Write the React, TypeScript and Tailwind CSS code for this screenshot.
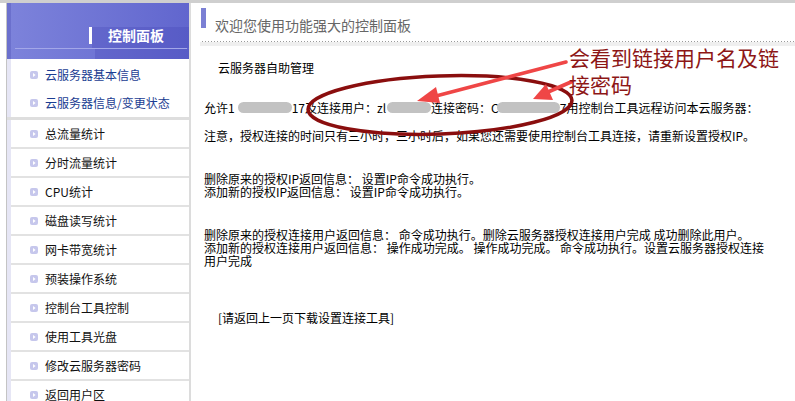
import React from "react";

const groupOne = ["云服务器基本信息", "云服务器信息/变更状态"];
const groupTwo = [
  "总流量统计",
  "分时流量统计",
  "CPU统计",
  "磁盘读写统计",
  "网卡带宽统计",
  "预装操作系统",
  "控制台工具控制",
  "使用工具光盘",
  "修改云服务器密码",
  "返回用户区",
];

function Bullet() {
  return (
    <svg width="8" height="8" viewBox="0 0 8 8" className="shrink-0">
      <rect x="0" y="0" width="8" height="8" rx="2" fill="#c6c7ec" />
      <polygon points="3,2 5.6,4 3,6" fill="#ffffff" />
    </svg>
  );
}

function Blob({ w, ml }: { w: string; ml: string }) {
  return <span className={`inline-block h-[11px] rounded-full bg-[#c2c2c2] blur-[0.6px] ${w} ${ml}`} />;
}

export default function App() {
  return (
    <div className="relative w-[795px] h-[401px] overflow-hidden bg-white font-['Noto_Sans_CJK_SC','Noto_Sans',sans-serif] text-[12px] text-black">
      <div className="h-[3px] bg-[#cfcfcf]" />
      <div className="flex">
        {/* Sidebar */}
        <div className="ml-[6px] w-[185px] border-l border-l-[#c4c4c4] border-r-2 border-r-[#dcdcdc] flex flex-col">
          {/* header */}
          <div className="h-[56px] flex bg-[linear-gradient(to_right,#7d83db,#6166ce)]">
            <div className="w-[4px] bg-[#6b70cd]" />
            <div className="flex-1 flex flex-col">
              <div className="h-[24px]" />
              <div className="flex h-[21px]">
                <div className="w-[81px] flex justify-end">
                  <div className="w-[3px] h-[17px] bg-white" />
                </div>
                <div className="flex-1 bg-[#3a3cb0]/25 pl-[16px] flex items-center pb-[6px]">
                  <span className="text-white font-bold text-[14px] leading-[16px]">控制面板</span>
                </div>
              </div>
              <div className="h-[1px] ml-[4px] mr-[2px] bg-[#a3a7e8]" />
              <div className="flex flex-1">
                <div className="w-[84px]" />
                <div className="flex-1 bg-[#3a3cb0]/25" />
              </div>
            </div>
          </div>
          {/* group one */}
          <div className="border-l-4 border-l-[#e6e6f5] pt-[2px]">
            {groupOne.map((t) => (
              <div key={t} className="h-[28px] flex items-center pl-[19px] gap-[7px]">
                <Bullet />
                <span className="text-[#1b3d92] leading-[14px]">{t}</span>
              </div>
            ))}
          </div>
          <div className="h-[3px] bg-[#dedede]" />
          <div className="border-l-4 border-l-[#e6e6f5]">
            {groupTwo.map((t) => (
              <div key={t} className="h-[29px] border-b-2 border-b-[#e2e2e2] flex items-center pl-[19px] gap-[7px]">
                <Bullet />
                <span className="text-[#111] leading-[14px]">{t}</span>
              </div>
            ))}
          </div>
        </div>

        {/* Main */}
        <div className="ml-[9px] flex-1 flex flex-col">
          <div className="flex items-start">
            <div className="ml-[1px] mt-[5px] w-[5px] h-[20px] bg-[#7b80d4]" />
            <div className="ml-[9px] pt-[14px] text-[14px] leading-[16px] text-[#666]">欢迎您使用功能强大的控制面板</div>
          </div>
          <div className="mt-[8px] ml-[2px] h-[1px] bg-[linear-gradient(to_right,#9a9a9a_1px,transparent_1px)] bg-[length:3px_1px]" />
          <div className="h-[4px] bg-[#efefef]" />

          <div className="pl-[4px] whitespace-nowrap leading-[13px]">
            <div className="mt-[15px] pl-[14px]">云服务器自助管理</div>
            <div className="mt-[27px] flex items-center">
              <span>允许1</span>
              <Blob w="w-[54px]" ml="ml-[3px]" />
              <span>17及连接用户：zl</span>
              <Blob w="w-[44px]" ml="ml-[1px]" />
              <span>连接密码：C</span>
              <Blob w="w-[63px]" ml="ml-[-2px]" />
              <span>7用控制台工具远程访问本云服务器：</span>
            </div>
            <div className="mt-[15px]">注意，授权连接的时间只有三小时，三小时后，如果您还需要使用控制台工具连接，请重新设置授权IP。</div>
            <div className="mt-[30px]">
              <div>删除原来的授权IP返回信息： 设置IP命令成功执行。</div>
              <div>添加新的授权IP返回信息： 设置IP命令成功执行。</div>
            </div>
            <div className="mt-[30px]">
              <div>删除原来的授权连接用户返回信息： 命令成功执行。删除云服务器授权连接用户完成 成功删除此用户。</div>
              <div>添加新的授权连接用户返回信息： 操作成功完成。 操作成功完成。 命令成功执行。设置云服务器授权连接</div>
              <div>用户完成</div>
            </div>
            <div className="mt-[44px] pl-[14px]">[请返回上一页下载设置连接工具]</div>
          </div>
        </div>
      </div>

      {/* annotation overlay */}
      <svg className="absolute left-0 top-0 pointer-events-none" width="795" height="401" viewBox="0 0 795 401">
        <ellipse cx="440" cy="105" rx="132" ry="29" transform="rotate(-2 440 105)" fill="none" stroke="#8a0e0e" strokeWidth="3.5" />
        <line x1="566" y1="62" x2="436" y2="96" stroke="#ef4646" strokeWidth="3.5" strokeLinecap="round" />
        <polygon points="417,101 440,103 436,87" fill="#ef4646" />
        <line x1="571" y1="82" x2="548" y2="92" stroke="#ef4646" strokeWidth="4" strokeLinecap="round" />
        <polygon points="533,99 553,100 546,84" fill="#ef4646" />
      </svg>
      <div className="absolute left-[569px] top-[44px] text-[21px] leading-[27px] text-[#8d1616] whitespace-nowrap">
        会看到链接用户名及链
        <br />
        接密码
      </div>
    </div>
  );
}
